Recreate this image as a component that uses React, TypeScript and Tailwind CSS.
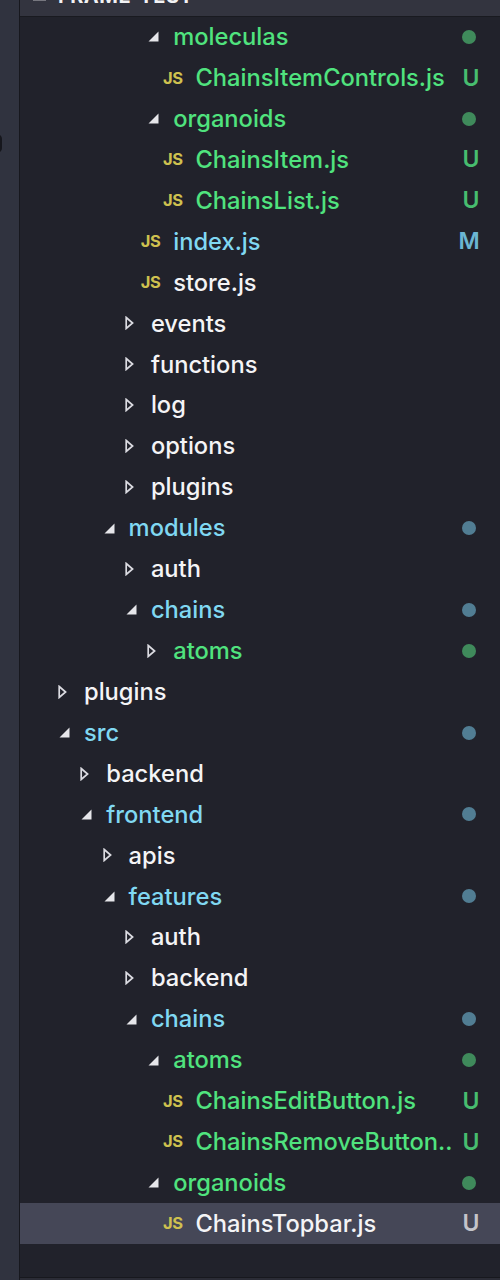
import React from 'react';

type Row = {
  name: string;
  level: number;
  kind: 'open' | 'closed' | 'js';
  color?: 'white' | 'green' | 'blue';
  status?: 'U' | 'M' | 'green' | 'blue';
  selected?: boolean;
};

const rows: Row[] = [
  { name: 'moleculas', level: 4, kind: 'open', color: 'green', status: 'green' },
  { name: 'ChainsItemControls.js', level: 5, kind: 'js', color: 'green', status: 'U' },
  { name: 'organoids', level: 4, kind: 'open', color: 'green', status: 'green' },
  { name: 'ChainsItem.js', level: 5, kind: 'js', color: 'green', status: 'U' },
  { name: 'ChainsList.js', level: 5, kind: 'js', color: 'green', status: 'U' },
  { name: 'index.js', level: 4, kind: 'js', color: 'blue', status: 'M' },
  { name: 'store.js', level: 4, kind: 'js' },
  { name: 'events', level: 3, kind: 'closed' },
  { name: 'functions', level: 3, kind: 'closed' },
  { name: 'log', level: 3, kind: 'closed' },
  { name: 'options', level: 3, kind: 'closed' },
  { name: 'plugins', level: 3, kind: 'closed' },
  { name: 'modules', level: 2, kind: 'open', color: 'blue', status: 'blue' },
  { name: 'auth', level: 3, kind: 'closed' },
  { name: 'chains', level: 3, kind: 'open', color: 'blue', status: 'blue' },
  { name: 'atoms', level: 4, kind: 'closed', color: 'green', status: 'green' },
  { name: 'plugins', level: 0, kind: 'closed' },
  { name: 'src', level: 0, kind: 'open', color: 'blue', status: 'blue' },
  { name: 'backend', level: 1, kind: 'closed' },
  { name: 'frontend', level: 1, kind: 'open', color: 'blue', status: 'blue' },
  { name: 'apis', level: 2, kind: 'closed' },
  { name: 'features', level: 2, kind: 'open', color: 'blue', status: 'blue' },
  { name: 'auth', level: 3, kind: 'closed' },
  { name: 'backend', level: 3, kind: 'closed' },
  { name: 'chains', level: 3, kind: 'open', color: 'blue', status: 'blue' },
  { name: 'atoms', level: 4, kind: 'open', color: 'green', status: 'green' },
  { name: 'ChainsEditButton.js', level: 5, kind: 'js', color: 'green', status: 'U' },
  { name: 'ChainsRemoveButton..', level: 5, kind: 'js', color: 'green', status: 'U' },
  { name: 'organoids', level: 4, kind: 'open', color: 'green', status: 'green' },
  { name: 'ChainsTopbar.js', level: 5, kind: 'js', status: 'U', selected: true },
];

const OpenArrow = () => (
  <svg width="11" height="11" viewBox="0 0 11 11" className="block">
    <path d="M10.5 0.5V10.5H0.5Z" fill="#e6e6ea" />
  </svg>
);

const ClosedArrow = () => (
  <svg width="9" height="14" viewBox="0 0 9 14" className="block">
    <path d="M1.2 1.5L7.6 7L1.2 12.5Z" fill="none" stroke="#dcdce2" strokeWidth="1.7" />
  </svg>
);

const nameColor = { white: 'text-[#f4f4f6]', green: 'text-[#50e37e]', blue: 'text-[#80d8f2]' };

const Status = ({ row }: { row: Row }) => {
  if (row.status === 'green') return <span className="w-[14px] h-[14px] rounded-full bg-[#3f8a5b]" />;
  if (row.status === 'blue') return <span className="w-[14px] h-[14px] rounded-full bg-[#517d93]" />;
  if (row.status === 'U')
    return <span className={`ml-[4px] font-semibold ${row.selected ? 'text-[#c4c4ca]' : 'text-[#47bd6f]'}`}>U</span>;
  if (row.status === 'M') return <span className="text-[#6bb5d2] font-semibold">M</span>;
  return null;
};

const TreeRow = ({ row }: { row: Row }) => {
  // one level is about 22.3px, level 0 text starts at 64px from the tree edge
  const gap = row.kind === 'js' ? 13 : row.kind === 'closed' ? 17 : 14;
  const textLeft = 64 + row.level * 22.3;
  return (
    <div className={`relative h-[40.93px] flex items-center ${row.selected ? 'bg-[#454757]' : ''}`}>
      <div className="shrink-0 flex items-center justify-end" style={{ width: textLeft - gap, marginRight: gap }}>
        {row.kind === 'open' && <OpenArrow />}
        {row.kind === 'closed' && <ClosedArrow />}
        {row.kind === 'js' && <span className="text-[16.5px] font-bold text-[#cfc14f] tracking-[-0.5px]">JS</span>}
      </div>
      <span className={`whitespace-nowrap text-[23.7px] font-medium ${nameColor[row.color ?? 'white']}`}>{row.name}</span>
      <div className="absolute left-[434px] w-[30px] top-0 bottom-0 flex items-center justify-center text-[23px]">
        <Status row={row} />
      </div>
    </div>
  );
};

export default function App() {
  return (
    <div className="w-[500px] h-[1280px] flex overflow-hidden bg-[#21222b] font-['Inter','Liberation_Sans',sans-serif]">
      <div className="relative w-[19px] shrink-0 bg-[#30333f] overflow-hidden">
        <div className="absolute left-[-8px] top-[134px] w-[10px] h-[19px] rounded-full bg-[#16171d]" />
      </div>
      <div className="w-px shrink-0 bg-[#17181e]" />
      <div className="flex-1 min-w-0 flex flex-col">
        <div className="h-[16.5px] shrink-0 overflow-hidden relative bg-[#33343f] border-b border-[#191a20]">
          <div className="absolute left-[38px] top-[-18px] text-[20px] leading-[28px] font-bold tracking-[0.5px] text-[#f2f2f4] whitespace-nowrap">
            FRAME-TEST
          </div>
          <div className="absolute left-[13px] top-0 w-[13px] h-px bg-[#77777f]" />
        </div>
        <div className="flex-1">
          {rows.map((row, i) => (
            <TreeRow key={i} row={row} />
          ))}
        </div>
        <div className="h-[3px] shrink-0 bg-[#2b2c36] border-t border-[#17181e]" />
      </div>
    </div>
  );
}
